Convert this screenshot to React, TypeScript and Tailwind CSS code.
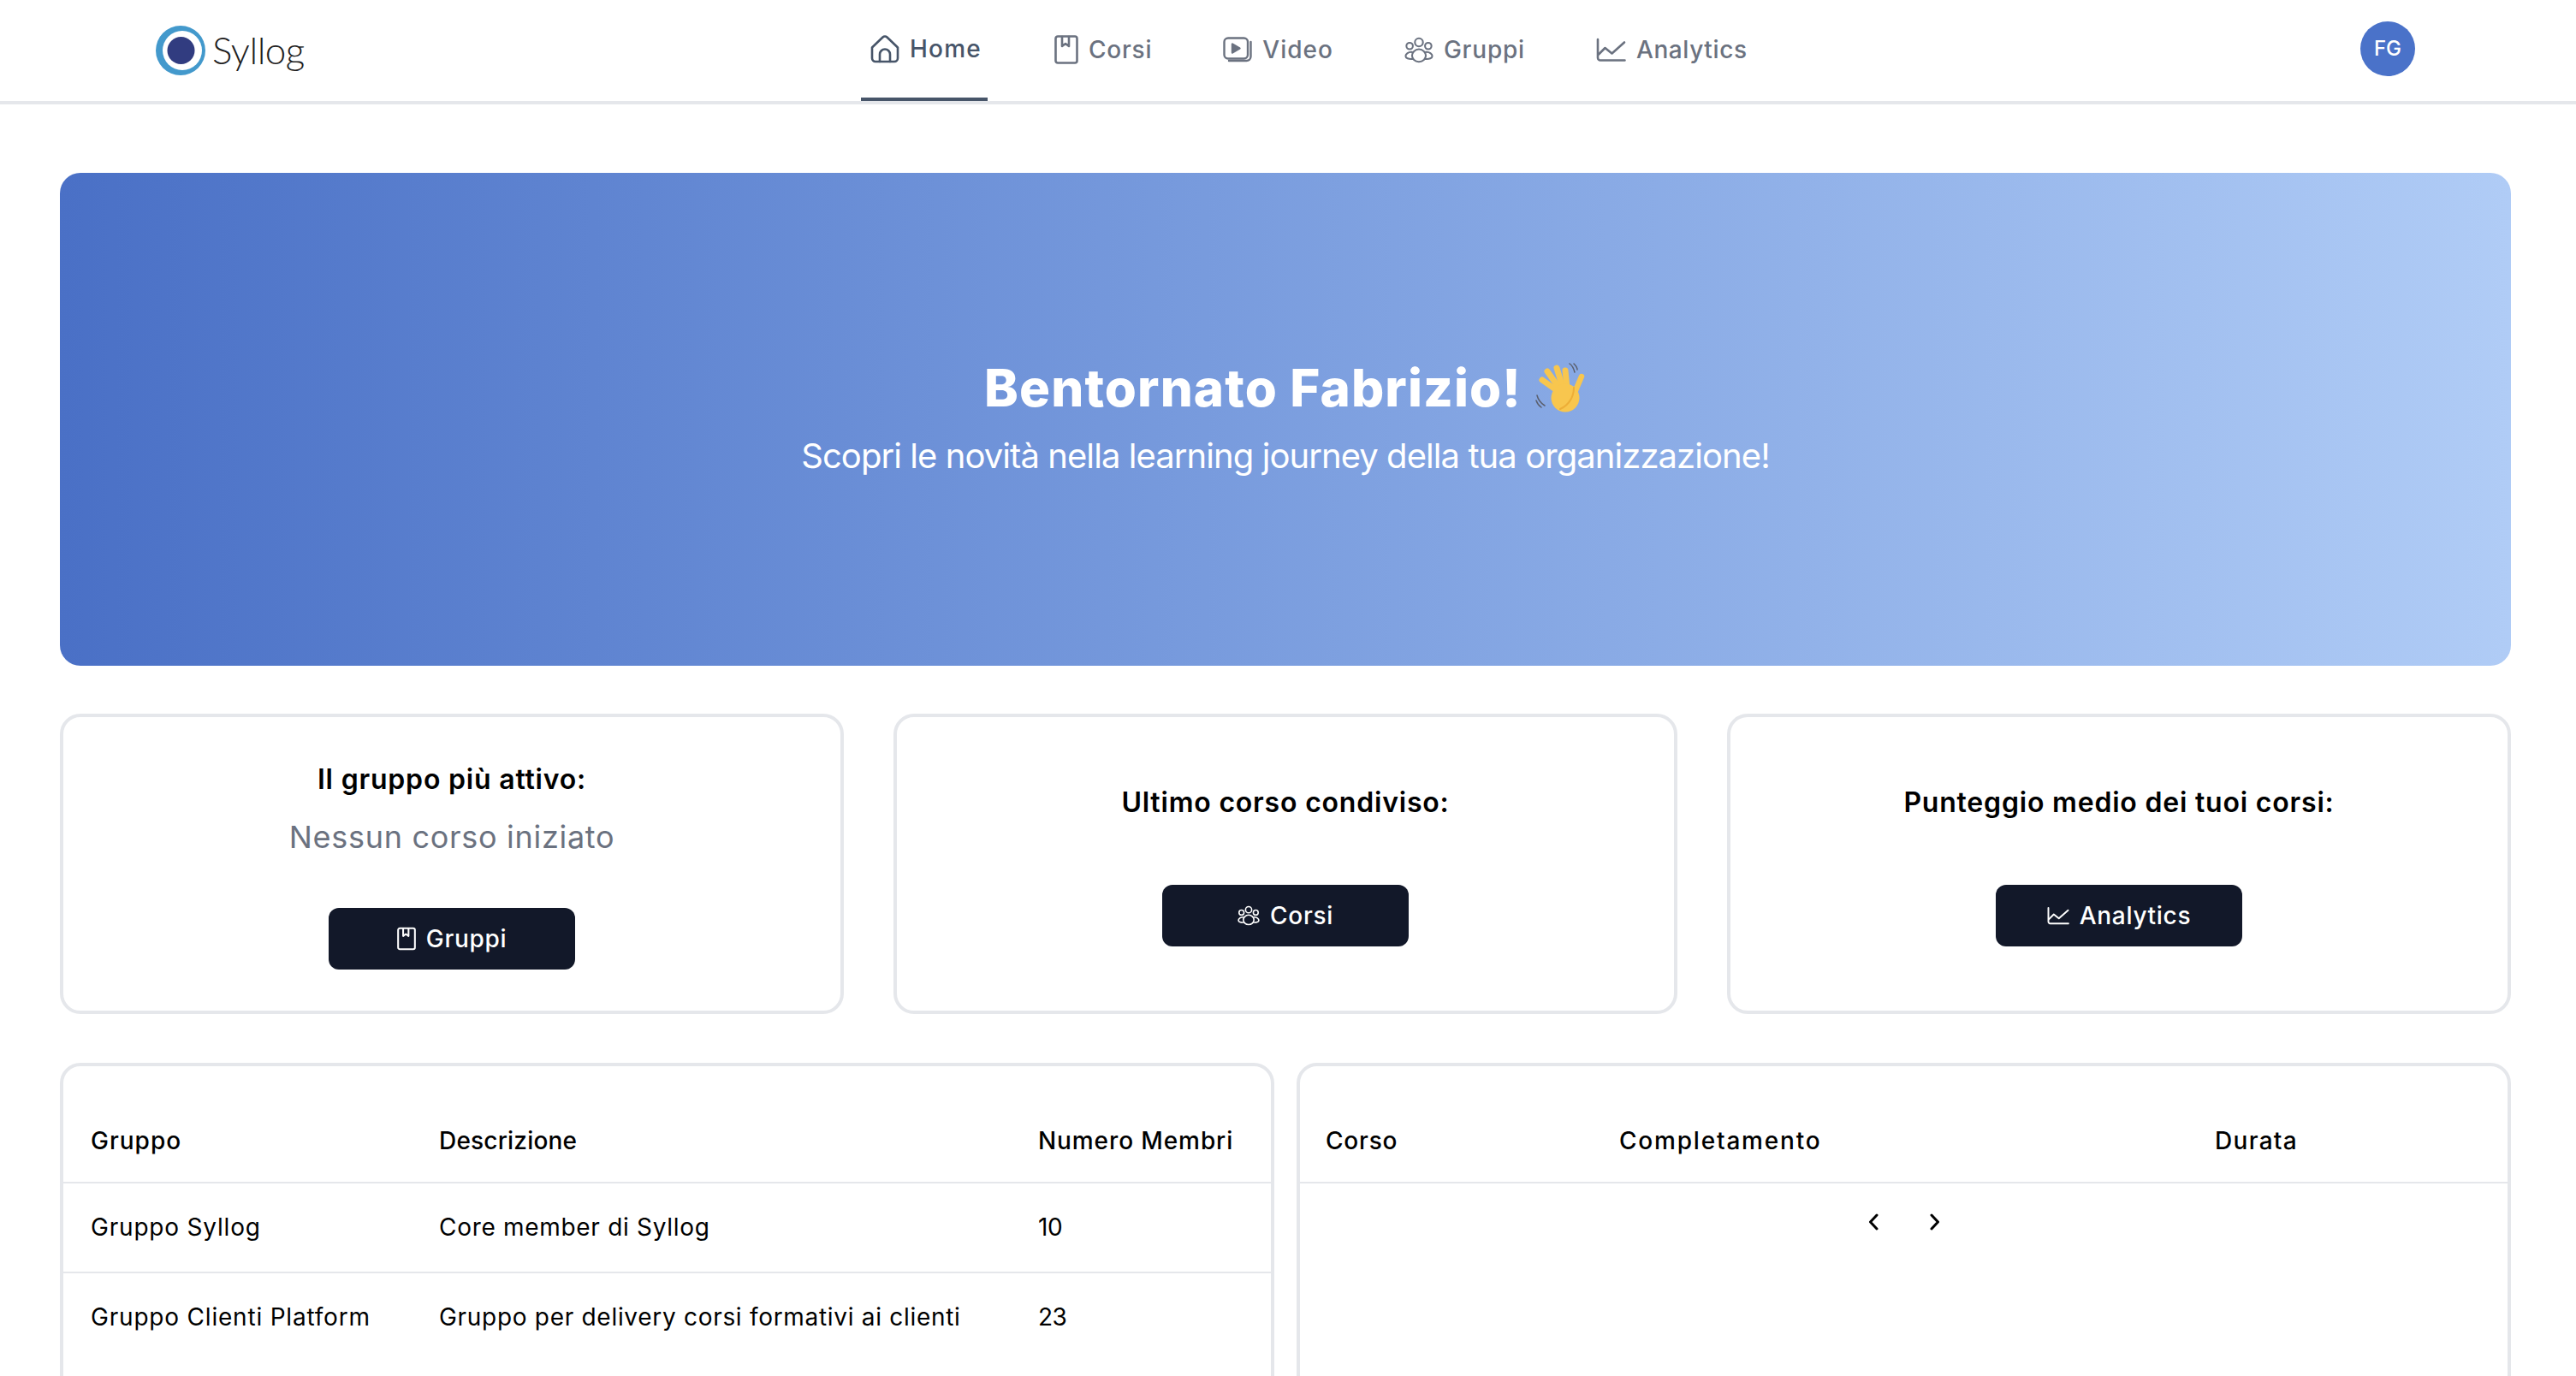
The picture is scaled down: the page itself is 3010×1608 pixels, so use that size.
// App.tsx - Syllog dashboard
import type { ReactNode } from "react";

const FONT = "font-['Inter','Liberation_Sans',sans-serif]";

const HomeIcon = ({ className }: { className?: string }) => (
  <svg viewBox="0 0 34 34" fill="none" stroke="currentColor" strokeWidth="2.6" strokeLinecap="round" strokeLinejoin="round" className={className}>
    <path d="M2 15.500 14.500 3.500a3.600 3.600 0 0 1 5 0L32 15.500V28a4 4 0 0 1-4 4H6a4 4 0 0 1-4-4Z" />
    <path d="M11 32v-8.500a6 6 0 0 1 12 0V32" />
  </svg>
);

const BookIcon = ({ className }: { className?: string }) => (
  <svg viewBox="0 0 28 34" fill="none" stroke="currentColor" strokeWidth="2.6" strokeLinecap="round" strokeLinejoin="round" className={className}>
    <rect x="1.500" y="1.500" width="25" height="31" rx="2.500" />
    <path d="M9 2v11l4-3 4 3V2" />
  </svg>
);

const VideoIcon = ({ className }: { className?: string }) => (
  <svg viewBox="0 0 34 30" fill="none" stroke="currentColor" strokeWidth="2.4" strokeLinecap="round" strokeLinejoin="round" className={className}>
    <rect x="1.500" y="1.500" width="27.500" height="24" rx="4.500" />
    <path d="M32.500 6v17a5 5 0 0 1-5 5H7" />
    <path d="M11 8.500v10l8.500-5Z" fill="currentColor" />
  </svg>
);

const GroupIcon = ({ className }: { className?: string }) => (
  <svg viewBox="0 0 36 32" fill="none" stroke="currentColor" strokeWidth="2.2" strokeLinecap="round" strokeLinejoin="round" className={className}>
    <circle cx="18" cy="6.500" r="5" />
    <circle cx="6.500" cy="11" r="4" />
    <circle cx="29.500" cy="11" r="4" />
    <path d="M18 15c-5 0-8.500 4-8.500 8s3.500 7.500 8.500 7.500 8.500-3.500 8.500-7.500-3.500-8-8.500-8Z" />
    <path d="M9.500 18.500C5 18 1.500 21 1.500 23.500S5 27.500 10.500 27" />
    <path d="M26.500 18.500c4.500-.5 8 2.500 8 5s-3.500 4-9 3.500" />
  </svg>
);

const ChartIcon = ({ className }: { className?: string }) => (
  <svg viewBox="0 0 35 28" fill="none" stroke="currentColor" strokeWidth="2.6" strokeLinecap="round" strokeLinejoin="round" className={className}>
    <path d="M2 2v21.500A3 3 0 0 0 5 26.500h28.500" />
    <path d="M3 19.500 10.500 12l8 6.500L33 5.500" />
  </svg>
);

const ChevronLeft = () => (
  <svg viewBox="0 0 12 20" fill="none" stroke="currentColor" strokeWidth="3" strokeLinecap="round" strokeLinejoin="round" className="w-[12px] h-[20px] text-black">
    <path d="M10 2 2.500 10l7.500 8" />
  </svg>
);

const ChevronRight = () => (
  <svg viewBox="0 0 12 20" fill="none" stroke="currentColor" strokeWidth="3" strokeLinecap="round" strokeLinejoin="round" className="w-[12px] h-[20px] text-black">
    <path d="M2 2l7.500 8L2 18" />
  </svg>
);

const WaveHand = () => (
  <svg viewBox="0 0 60 60" fill="none" strokeLinecap="round" className="w-[62px] h-[60px] ml-[14px] shrink-0">
    <g stroke="#F8C64E" strokeWidth="7">
      <path d="M30 36 9 21" />
      <path d="M30 32 15 11" />
      <path d="M33 30 26 7" />
      <path d="M38 30 36 10" />
      <path d="M46 38 55 17" strokeWidth="6.500" />
    </g>
    <circle cx="36" cy="42" r="16.500" fill="#F8C64E" />
    <path d="M46 30c0 10-5 20-16 25" stroke="#EDAE37" strokeWidth="2" />
    <g stroke="#5A5F6E" strokeWidth="1.500">
      <path d="M41 2c3 2 5 6 6 10" />
      <path d="M46 2c2 2 4 4 4 7" />
      <path d="M3 39c1 4 4 9 9 12" />
      <path d="M2 45c1 3 3 6 6 8" />
    </g>
  </svg>
);

const NavItem = ({ icon, label, active, tracking }: { icon: ReactNode; label: string; active?: boolean; tracking: string }) => (
  <div className={`flex items-center gap-[12px] pl-[11px] h-full border-b-4 ${active ? "pr-[7px] mr-[6px] border-[#475569] text-[#475569]" : "pr-[11px] pt-[2px] border-transparent text-[#6b7280]"}`}>
    {icon}
    <span className={`text-[28px] font-medium leading-[42px] ${tracking}`}>{label}</span>
  </div>
);

const ActionButton = ({ icon, label }: { icon: ReactNode; label: string }) => (
  <button className="flex items-center justify-center gap-[12px] w-[288px] h-[72px] rounded-xl bg-[#121829] text-white text-[28px] font-medium tracking-[0.7px]">
    {icon}
    {label}
  </button>
);

const StatCard = ({ title, note, button }: { title: string; note?: string; button: ReactNode }) => (
  <div className="flex flex-col items-center justify-center h-[351px] border-4 border-[#e5e7eb] rounded-3xl bg-white">
    <h3 className="text-[32px] leading-[48px] font-semibold text-black tracking-[0.8px] mb-4">{title}</h3>
    {note && <p className="text-[36px] leading-[54px] text-[#6b7280] tracking-[0.7px]">{note}</p>}
    <div className="mt-14">{button}</div>
  </div>
);

const groups = [
  { name: "Gruppo Syllog", description: "Core member di Syllog", members: 10 },
  { name: "Gruppo Clienti Platform", description: "Gruppo per delivery corsi formativi ai clienti", members: 23 },
];

export default function App() {
  return (
    <div className={`h-screen overflow-hidden bg-white ${FONT}`}>
      <header className="flex items-stretch h-[122px] border-b-4 border-[#e5e7eb]">
        <div className="flex items-center w-[1006px] shrink-0 pl-[182px]">
          <svg viewBox="0 0 58 58" className="w-[58px] h-[58px] shrink-0">
            <circle cx="29" cy="29" r="29" fill="#4399CC" />
            <circle cx="31" cy="29" r="23" fill="#fff" />
            <circle cx="29.500" cy="29" r="16" fill="#313C80" />
          </svg>
          <span className="ml-[8px] pb-[2px] text-[44px] leading-none font-['Lato',sans-serif] font-light text-[#1f1f1f] tracking-[-0.5px]">Syllog</span>
        </div>
        <nav className="flex items-stretch gap-[61px]">
          <NavItem active tracking="tracking-[1.2px]" icon={<HomeIcon className="w-[34px] h-[34px]" />} label="Home" />
          <NavItem tracking="tracking-[0.8px]" icon={<BookIcon className="w-[28px] h-[34px]" />} label="Corsi" />
          <NavItem tracking="tracking-[1px]" icon={<VideoIcon className="w-[34px] h-[30px]" />} label="Video" />
          <NavItem tracking="tracking-[0.8px]" icon={<GroupIcon className="w-[34px] h-[31px]" />} label="Gruppi" />
          <NavItem tracking="tracking-[0.6px]" icon={<ChartIcon className="w-[35px] h-[28px]" />} label="Analytics" />
        </nav>
        <div className="ml-auto mr-[188px] flex items-center pb-[4px]">
          <div className="flex items-center justify-center w-[64px] h-[64px] rounded-full bg-[#4a72c9] text-white text-[24px] font-medium">FG</div>
        </div>
      </header>

      <main className="pl-[70px] pr-[76px] pt-[80px]">
        <section className="flex flex-col items-center justify-center h-[576px] rounded-3xl bg-gradient-to-r from-[#4a70c6] to-[#b0ccf6] text-white pb-[9px]">
          <div className="flex items-center mb-[5px]">
            <h1 className="text-[60px] leading-[90px] font-extrabold tracking-[1.1px]">Bentornato Fabrizio!</h1>
            <WaveHand />
          </div>
          <p className="text-[40px] leading-[60px] tracking-[-0.93px]">Scopri le novità nella learning journey della tua organizzazione!</p>
        </section>

        <section className="grid grid-cols-3 gap-[58px] mt-[56px]">
          <StatCard title="Il gruppo più attivo:" note="Nessun corso iniziato" button={<ActionButton icon={<BookIcon className="w-[22px] h-[28px]" />} label="Gruppi" />} />
          <StatCard title="Ultimo corso condiviso:" button={<ActionButton icon={<GroupIcon className="w-[26px] h-[24px]" />} label="Corsi" />} />
          <StatCard title="Punteggio medio dei tuoi corsi:" button={<ActionButton icon={<ChartIcon className="w-[26px] h-[22px]" />} label="Analytics" />} />
        </section>

        <section className="grid grid-cols-2 gap-[26px] mt-[57px]">
          <div className="h-[460px] border-4 border-[#e5e7eb] rounded-3xl bg-white">
            <table className="w-full table-fixed text-[28px] text-left text-black">
              <colgroup>
                <col className="w-[407px]" />
                <col className="w-[700px]" />
                <col />
              </colgroup>
              <thead>
                <tr className="border-b-2 border-[#e5e7eb]">
                  <th className="pl-[32px] pt-[66px] pb-[27px] leading-[42px] font-medium tracking-[1px]">Gruppo</th>
                  <th className="pl-[32px] pt-[66px] pb-[27px] leading-[42px] font-medium tracking-[0.2px]">Descrizione</th>
                  <th className="pl-[32px] pt-[66px] pb-[27px] leading-[42px] font-medium tracking-[0.9px]">Numero Membri</th>
                </tr>
              </thead>
              <tbody>
                {groups.map((g, i) => (
                  <tr key={g.name} className={i === 0 ? "border-b-2 border-[#e5e7eb]" : ""}>
                    <td className="pl-[32px] h-[105px] pb-[2px] whitespace-nowrap tracking-[0.8px]">{g.name}</td>
                    <td className="pl-[32px] h-[105px] pb-[2px] whitespace-nowrap tracking-[0.7px]">{g.description}</td>
                    <td className="pl-[32px] h-[105px] pb-[2px] tracking-[-0.5px]">{g.members}</td>
                  </tr>
                ))}
              </tbody>
            </table>
          </div>

          <div className="h-[460px] border-4 border-[#e5e7eb] rounded-3xl bg-white">
            <table className="w-full table-fixed text-[28px] text-left text-black">
              <colgroup>
                <col className="w-[341px]" />
                <col className="w-[696px]" />
                <col />
              </colgroup>
              <thead>
                <tr className="border-b-2 border-[#e5e7eb]">
                  <th className="pl-[30px] pt-[66px] pb-[27px] leading-[42px] font-medium tracking-[0.8px]">Corso</th>
                  <th className="pl-[32px] pt-[66px] pb-[27px] leading-[42px] font-medium tracking-[1.8px]">Completamento</th>
                  <th className="pl-[32px] pt-[66px] pb-[27px] leading-[42px] font-medium tracking-[1.3px]">Durata</th>
                </tr>
              </thead>
            </table>
            <div className="flex justify-center gap-[60px] pt-[35px]">
              <ChevronLeft />
              <ChevronRight />
            </div>
          </div>
        </section>
      </main>
    </div>
  );
}
